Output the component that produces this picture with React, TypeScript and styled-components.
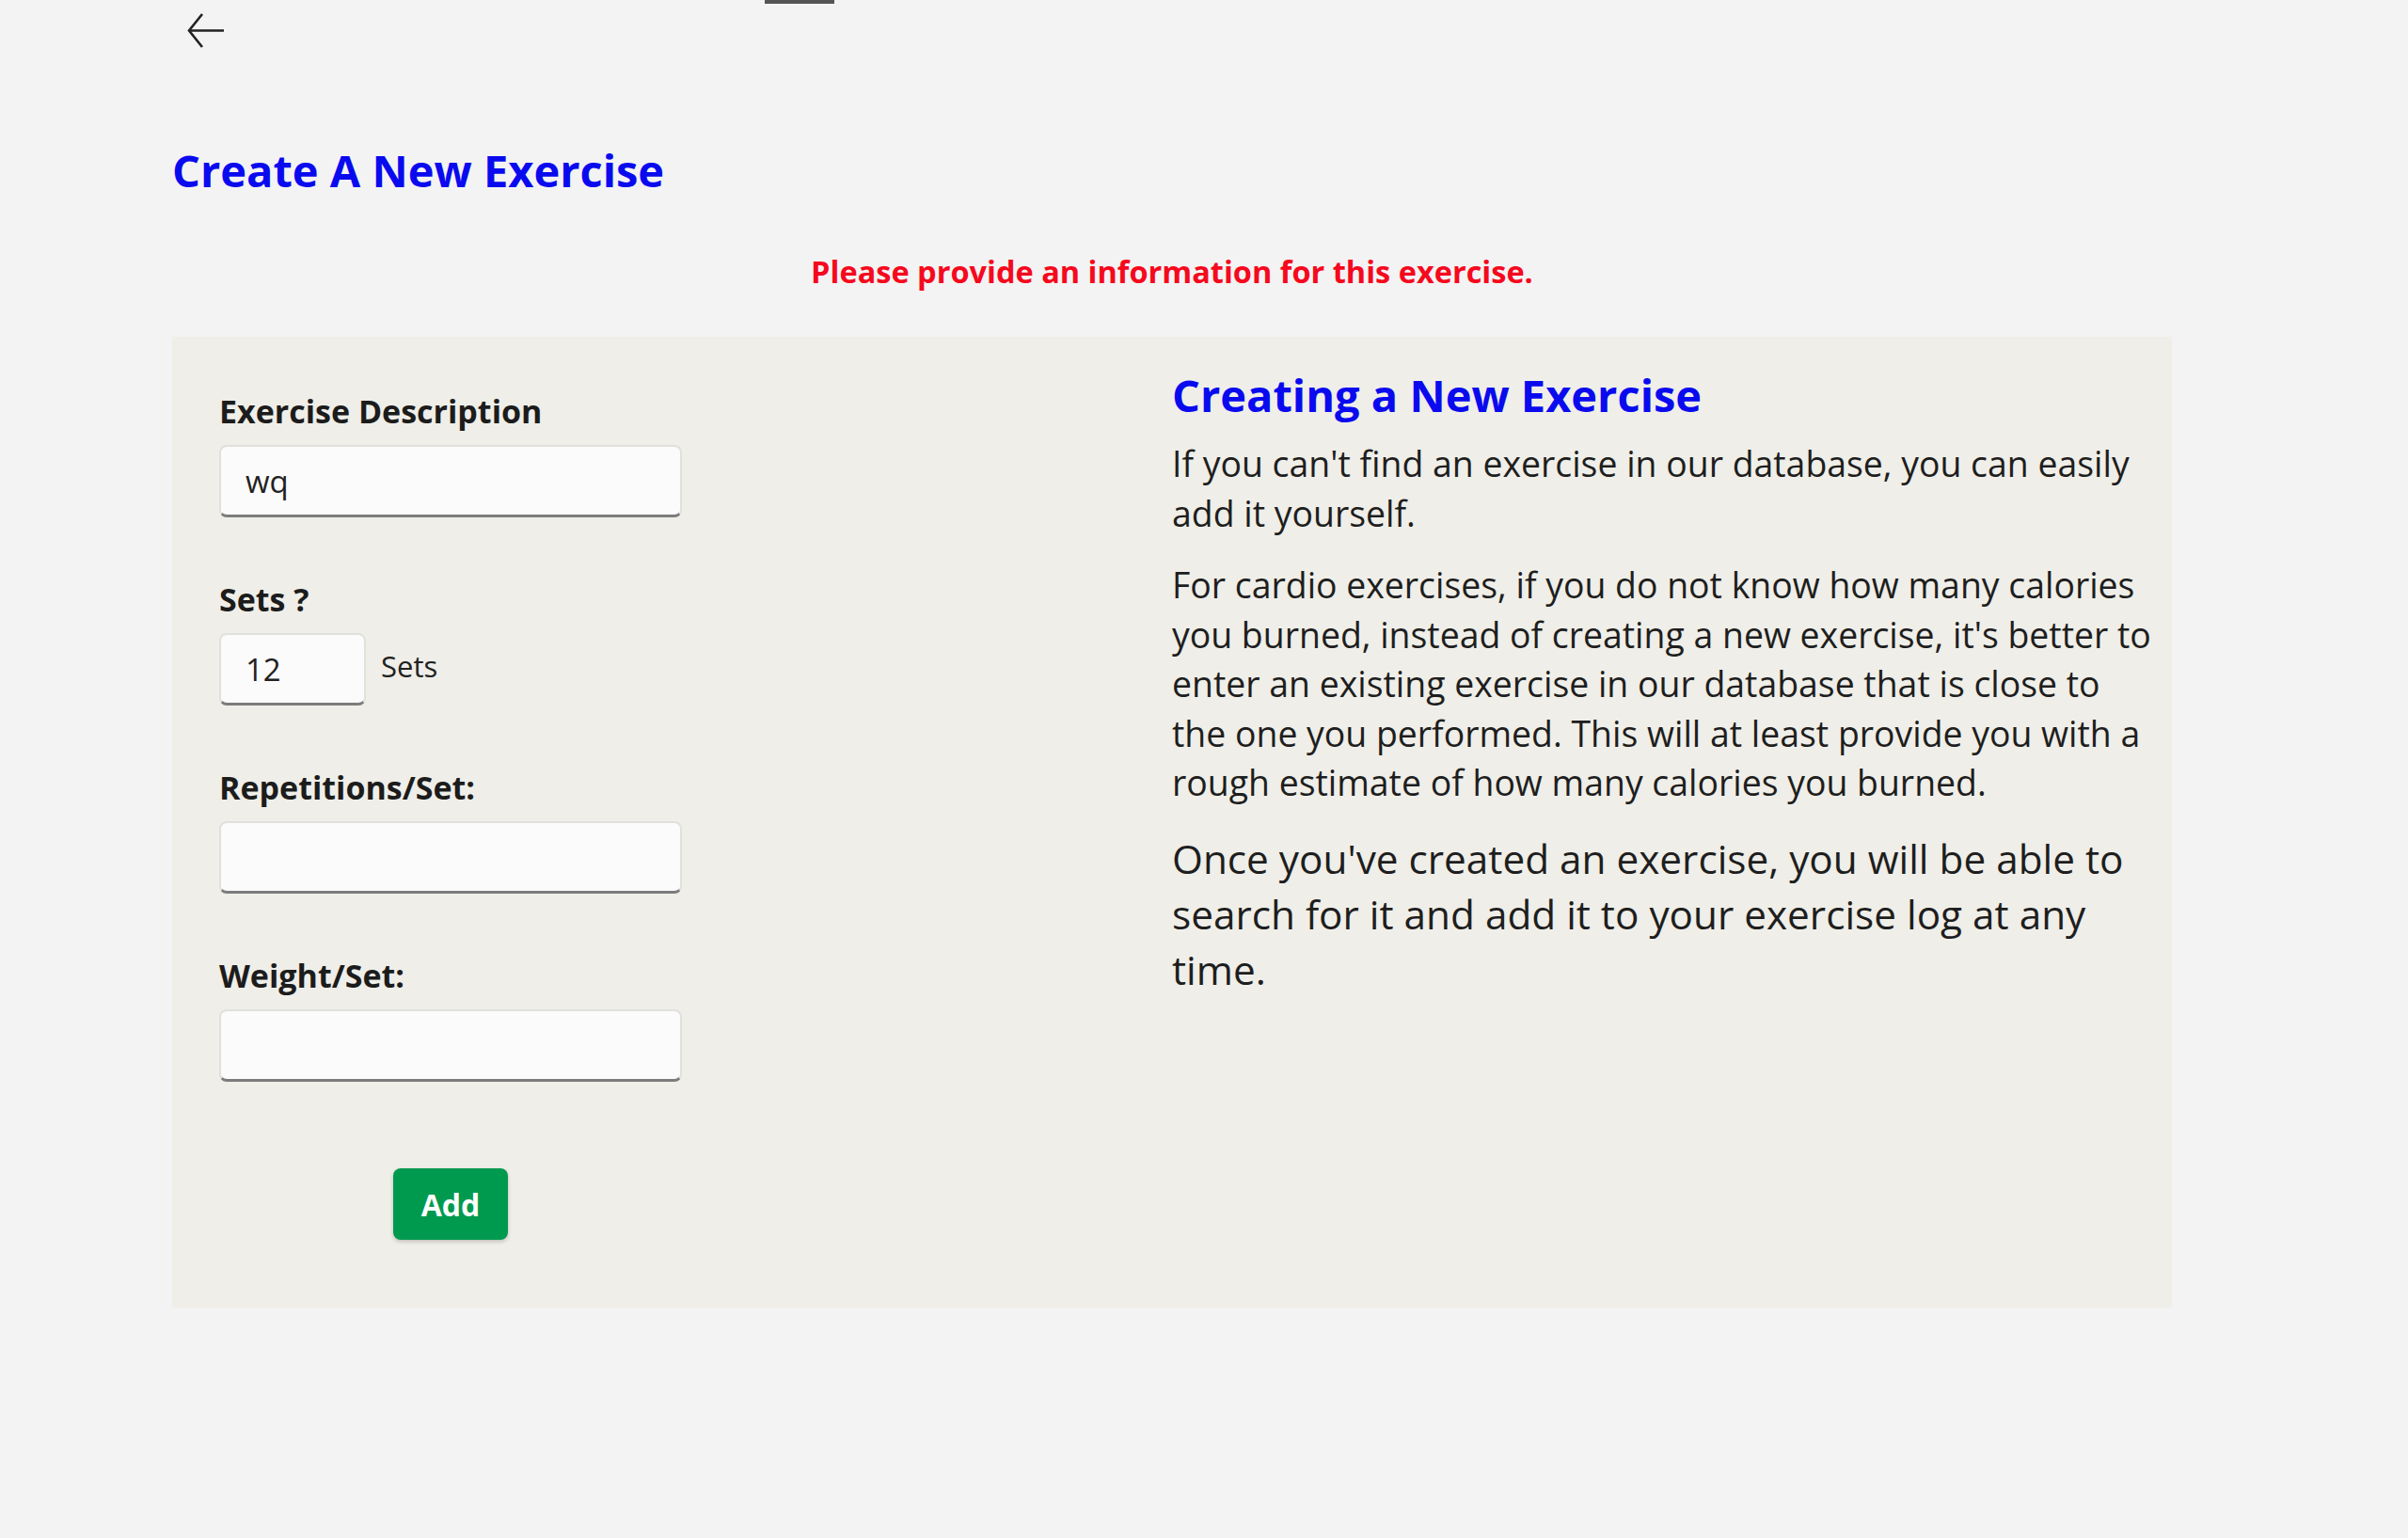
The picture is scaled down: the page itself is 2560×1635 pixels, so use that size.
import React from 'react';
import styled, { createGlobalStyle } from 'styled-components';

const GlobalStyle = createGlobalStyle`
  body {
    margin: 0;
    background: #f3f3f3;
    font-family: "Open Sans", "Noto Sans", sans-serif;
    color: #1e1e1e;
  }
`;

const Page = styled.div`
  position: relative;
  width: 2126px;
  margin-left: 183px;
  padding-top: 13px;
  min-height: 1622px;
`;

const ScrollMark = styled.div`
  position: absolute;
  top: 0;
  left: 630px;
  width: 74px;
  height: 4px;
  background: #555;
`;

const BackButton = styled.button`
  display: block;
  margin: 0 0 0 13px;
  padding: 0;
  border: none;
  background: none;
  width: 44px;
  height: 40px;
  color: #222;
  cursor: pointer;
`;

const Title = styled.h1`
  margin: 96px 0 0 0;
  font-size: 47px;
  line-height: 64px;
  font-weight: 700;
  color: #0a0aef;
`;

const Warning = styled.p`
  margin: 54px 0 0 0;
  text-align: center;
  font-size: 32.5px;
  line-height: 44px;
  font-weight: 700;
  color: #f5091d;
`;

const Panel = styled.div`
  display: grid;
  grid-template-columns: 1fr 1fr;
  margin-top: 47px;
  background: #efeee8;
`;

const FormColumn = styled.form`
  padding: 57px 0 72px 50px;
  width: 492px;
`;

const Field = styled.div`
  margin-bottom: 65px;
`;

const Label = styled.label`
  display: block;
  font-size: 34px;
  line-height: 44px;
  font-weight: 700;
  color: #1c1c1c;
  margin-bottom: 14px;
`;

const Row = styled.div`
  display: flex;
  align-items: center;
  gap: 16px;
`;

const Input = styled.input<{ $w?: number }>`
  box-sizing: border-box;
  width: ${(p) => (p.$w ? `${p.$w}px` : '100%')};
  height: 77px;
  padding: 0 26px;
  border: 2px solid #e0e0dc;
  border-bottom: 3px solid #7c7c7c;
  border-radius: 8px;
  background: #fbfbfb;
  font-family: inherit;
  font-size: 33px;
  color: #222;
  outline: none;
`;

const Unit = styled.span`
  font-size: 31px;
  color: #222;
  margin-top: -8px;
`;

const ButtonRow = styled.div`
  display: flex;
  justify-content: center;
  padding-top: 27px;
`;

const AddButton = styled.button`
  width: 122px;
  height: 76px;
  border: none;
  border-radius: 8px;
  background: #009a4f;
  color: #fff;
  font-family: inherit;
  font-size: 32px;
  font-weight: 700;
  box-shadow: 0 2px 4px rgba(0, 0, 0, 0.2);
  cursor: pointer;
`;

const InfoColumn = styled.div`
  padding: 30px 16px 40px 0;
`;

const InfoTitle = styled.h2`
  margin: 0 0 15px 0;
  font-size: 47px;
  line-height: 64px;
  font-weight: 700;
  color: #0a0aef;
`;

const Para = styled.p<{ $big?: boolean }>`
  margin: 0 0 24px 0;
  font-size: ${(p) => (p.$big ? '42.3px' : '37.4px')};
  line-height: ${(p) => (p.$big ? '59px' : '52.5px')};
  color: #1e1e1e;
`;

export default function App() {
  return (
    <>
      <GlobalStyle />
      <Page>
        <ScrollMark />
        <BackButton aria-label="Back">
          <svg width="44" height="40" viewBox="0 0 44 40" fill="none" stroke="currentColor" strokeWidth="2.6">
            <path d="M42 19.5H5" />
            <path d="M19 2 5 19.5 19 37" />
          </svg>
        </BackButton>
        <Title>Create A New Exercise</Title>
        <Warning>Please provide an information for this exercise.</Warning>
        <Panel>
          <FormColumn onSubmit={(e) => e.preventDefault()}>
            <Field>
              <Label>Exercise Description</Label>
              <Input defaultValue="wq" />
            </Field>
            <Field>
              <Label>Sets ?</Label>
              <Row>
                <Input $w={156} defaultValue="12" />
                <Unit>Sets</Unit>
              </Row>
            </Field>
            <Field>
              <Label>Repetitions/Set:</Label>
              <Input />
            </Field>
            <Field>
              <Label>Weight/Set:</Label>
              <Input />
            </Field>
            <ButtonRow>
              <AddButton type="submit">Add</AddButton>
            </ButtonRow>
          </FormColumn>
          <InfoColumn>
            <InfoTitle>Creating a New Exercise</InfoTitle>
            <Para>If you can't find an exercise in our database, you can easily add it yourself.</Para>
            <Para>
              For cardio exercises, if you do not know how many calories you burned, instead of creating a new
              exercise, it's better to enter an existing exercise in our database that is close to the one you
              performed. This will at least provide you with a rough estimate of how many calories you burned.
            </Para>
            <Para $big>
              Once you've created an exercise, you will be able to search for it and add it to your exercise log at
              any time.
            </Para>
          </InfoColumn>
        </Panel>
      </Page>
    </>
  );
}
